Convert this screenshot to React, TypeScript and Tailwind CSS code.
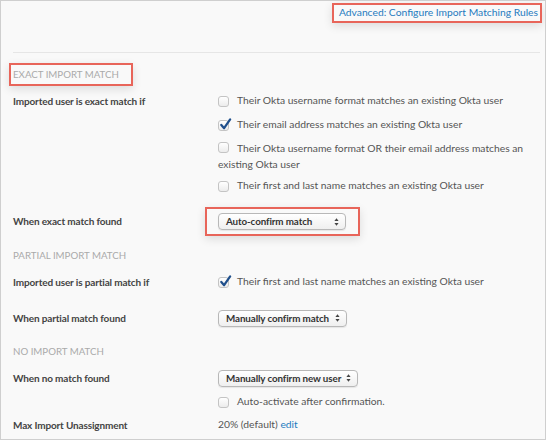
import React from "react";

const font = { fontFamily: "Lato, 'Liberation Sans', sans-serif" };

function Checkbox({ checked = false }: { checked?: boolean }) {
  return (
    <span className="relative inline-block align-[-1px] w-[11px] h-[11px] shrink-0 rounded-[3px] border border-[#c4c4c4] bg-gradient-to-b from-white to-[#ececec]">
      {checked && (
        <svg
          viewBox="0 0 14 14"
          className="absolute left-[0px] top-[-3px] w-[13px] h-[13px]"
        >
          <path
            d="M2.5 7.5 L5.5 11 L12 1.5"
            fill="none"
            stroke="#1f4f8c"
            strokeWidth="2.4"
            strokeLinecap="round"
            strokeLinejoin="round"
          />
        </svg>
      )}
    </span>
  );
}

function Option({ checked = false, children }: { checked?: boolean; children: React.ReactNode }) {
  return (
    <div className="flex items-center h-[20px] text-[10.3px] text-[#555] whitespace-nowrap">
      <Checkbox checked={checked} />
      <span className="ml-[8px]">{children}</span>
    </div>
  );
}

function Select({ label, width }: { label: string; width: string }) {
  return (
    <div
      className={`flex items-center justify-between h-[17px] ${width} rounded-[4px] border border-[#b8b8b8] bg-gradient-to-b from-white to-[#efefef] shadow-[0_1px_1px_rgba(0,0,0,0.08)] pl-[7px] pr-[6px] text-[9.8px] font-bold tracking-[-0.1px] text-[#333] whitespace-nowrap`}
    >
      <span>{label}</span>
      <svg viewBox="0 0 6 9" className="w-[5px] h-[8px]">
        <path d="M3 0 L5.5 3.2 L0.5 3.2 Z M3 9 L5.5 5.8 L0.5 5.8 Z" fill="#444" />
      </svg>
    </div>
  );
}

function Label({ children }: { children: React.ReactNode }) {
  return (
    <div className="w-[205px] shrink-0 text-[10px] font-bold tracking-[-0.15px] text-[#444] whitespace-nowrap">
      {children}
    </div>
  );
}

function Header({ children }: { children: React.ReactNode }) {
  return (
    <div className="h-[20px] flex items-center text-[9.7px] text-[#aaa] uppercase whitespace-nowrap">
      {children}
    </div>
  );
}

export default function App() {
  return (
    <div
      style={font}
      className="w-[546px] h-[440px] border border-[#cfcfcf] bg-[#f9f9f9] overflow-hidden"
    >
      <div className="h-[51px] flex justify-end pt-[2px] pr-[3px]">
        <div className="h-[20px] flex items-center border-2 border-[#e8655a] pl-[5px] pr-[2px] shadow-[0_3px_10px_rgba(0,0,0,0.12)]">
          <a className="text-[10.3px] text-[#1f7bbf] whitespace-nowrap">
            Advanced: Configure Import Matching Rules
          </a>
        </div>
      </div>
      <div className="ml-[12px] mr-[5px] border-t border-[#e6e6e6]" />

      <div className="pl-[12px]">
        <div className="mt-[10px] -ml-[4px] w-[124px] h-[23px] flex items-center border-2 border-[#e8655a] pl-[2px] shadow-[0_3px_10px_rgba(0,0,0,0.12)] text-[9.7px] text-[#aaa] uppercase whitespace-nowrap">
          Exact Import Match
        </div>

        <div className="flex mt-[5px]">
          <Label>
            <div className="h-[20px] flex items-center">Imported user is exact match if</div>
          </Label>
          <div className="flex flex-col">
            <Option>Their Okta username format matches an existing Okta user</Option>
            <div className="mt-[4px]">
              <Option checked>Their email address matches an existing Okta user</Option>
            </div>
            <div className="mt-[5px] text-[10.3px] text-[#555] leading-[16px] w-[312px]">
              <Checkbox />
              <span className="ml-[8px]">
                Their Okta username format OR their email address matches an existing Okta user
              </span>
            </div>
            <div className="mt-[4px]">
              <Option>Their first and last name matches an existing Okta user</Option>
            </div>
          </div>
        </div>

        <div className="flex items-center mt-[11px]">
          <Label>When exact match found</Label>
          <div className="-ml-[13px] h-[29px] flex items-center border-2 border-[#e8655a] pl-[11px] pr-[12px] shadow-[0_3px_10px_rgba(0,0,0,0.12)]">
            <Select label="Auto-confirm match" width="w-[128px]" />
          </div>
        </div>

        <div className="mt-[9px]">
          <Header>Partial Import Match</Header>
        </div>

        <div className="flex items-center mt-[7px] h-[20px]">
          <Label>Imported user is partial match if</Label>
          <Option checked>Their first and last name matches an existing Okta user</Option>
        </div>

        <div className="flex items-center mt-[16px] h-[20px]">
          <Label>When partial match found</Label>
          <Select label="Manually confirm match" width="w-[129px]" />
        </div>

        <div className="mt-[13px]">
          <Header>No Import Match</Header>
        </div>

        <div className="flex items-center mt-[7px] h-[20px]">
          <Label>When no match found</Label>
          <Select label="Manually confirm new user" width="w-[140px]" />
        </div>

        <div className="flex items-center mt-[4px] h-[20px]">
          <div className="w-[205px] shrink-0" />
          <Option>Auto-activate after confirmation.</Option>
        </div>

        <div className="flex items-center mt-[3px] h-[20px]">
          <Label>Max Import Unassignment</Label>
          <div className="text-[10.3px] text-[#555] whitespace-nowrap">
            20% (default) <a className="text-[#1f7bbf]">edit</a>
          </div>
        </div>
      </div>
    </div>
  );
}
